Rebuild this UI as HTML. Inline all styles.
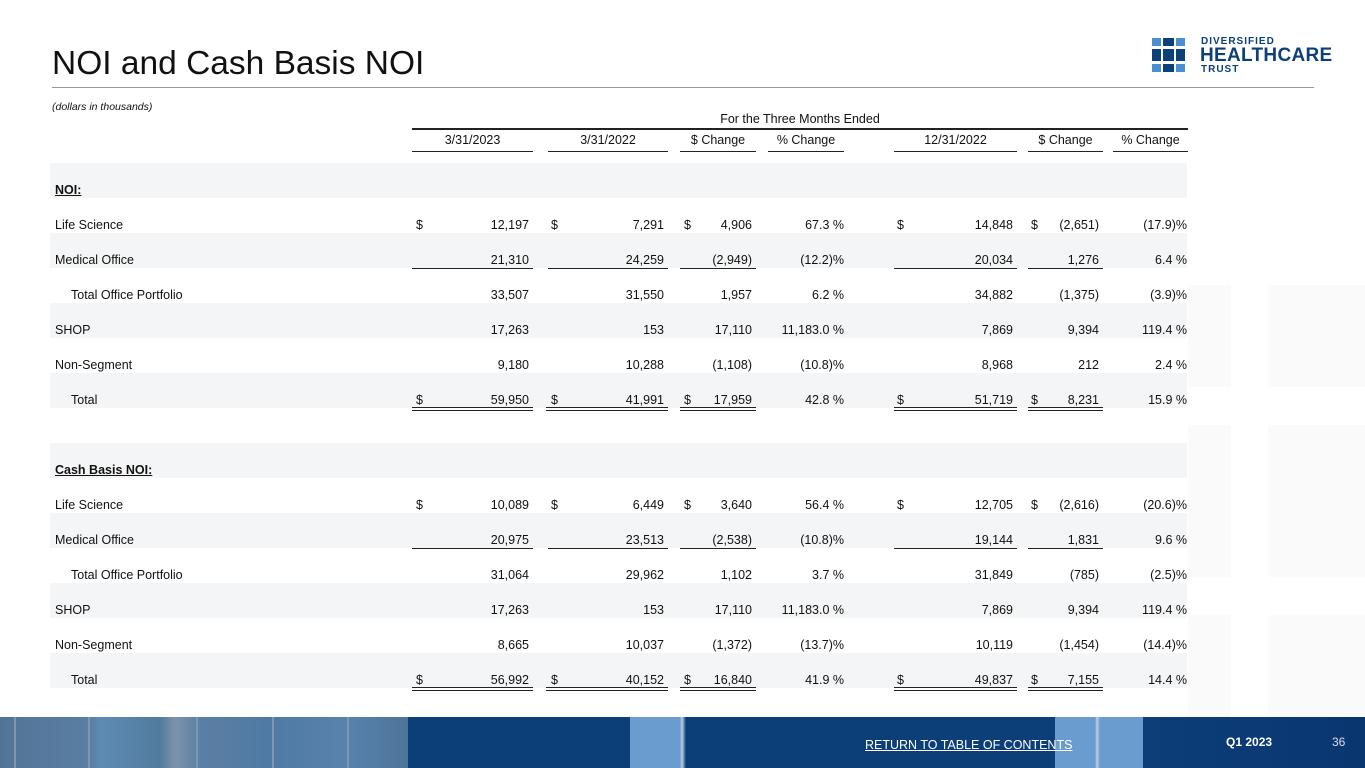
<!DOCTYPE html>
<html><head><meta charset="utf-8"><style>
*{margin:0;padding:0;box-sizing:border-box}
body{width:1365px;height:768px;position:relative;overflow:hidden;background:#fff;font-family:"Liberation Sans",sans-serif;color:#111}
.a{position:absolute}
.r{position:absolute;left:50px;width:1137px;height:35px;font-size:12.5px}
.g{background:#f4f5f6}
.r span{position:absolute;top:20px;white-space:nowrap;line-height:14px}
.l{left:5px}
.i{left:21px}
.c{text-align:right}
.c1{left:362px;width:117px}.c2{left:498px;width:116px}.c3{left:630px;width:72px}.c4{left:718px;width:76px}
.c5{left:844px;width:119px}.c6{left:978px;width:71px}.c7{left:1063px;width:74px}
.d1{left:366px}.d2{left:501px}.d3{left:634px}.d5{left:847px}.d6{left:981px}
.u{position:absolute;height:0;border-top:1px solid #222}
.uu{position:absolute;height:4px;border-top:1px solid #222;border-bottom:1px solid #222}
.h{position:absolute;top:133px;font-size:12.5px;text-align:center;border-bottom:1px solid #222;height:19px}
.bg{position:absolute;background:#fafafb}
</style></head><body>
<div class="bg" style="left:1188px;top:285px;width:43px;height:102px"></div>
<div class="bg" style="left:1268px;top:285px;width:97px;height:102px"></div>
<div class="bg" style="left:1188px;top:425px;width:43px;height:152px"></div>
<div class="bg" style="left:1268px;top:425px;width:97px;height:152px"></div>
<div class="bg" style="left:1188px;top:615px;width:43px;height:102px"></div>
<div class="bg" style="left:1268px;top:615px;width:97px;height:102px"></div>

<div class="a" style="left:52px;top:45px;font-size:33.5px;color:#111">NOI and Cash Basis NOI</div>
<div class="a" style="left:52px;top:87px;width:1262px;border-top:1px solid #999"></div>
<svg class="a" style="left:1150px;top:36px" width="60" height="40">
<g fill="#4a90d0"><rect x="2" y="2" width="9" height="8"/><rect x="26" y="2" width="9" height="8"/><rect x="2" y="28" width="9" height="8"/><rect x="26" y="28" width="9" height="8"/></g>
<g fill="#0d3f7a"><rect x="13" y="2" width="11" height="8"/><rect x="2" y="13" width="9" height="12"/><rect x="13" y="13" width="11" height="12"/><rect x="26" y="13" width="9" height="12"/><rect x="13" y="28" width="11" height="8"/></g>
</svg>
<div class="a" style="left:1201px;top:36px;font-size:10px;font-weight:bold;color:#0d3f7a;letter-spacing:1px">DIVERSIFIED</div>
<div class="a" style="left:1200px;top:45px;font-size:19px;font-weight:bold;color:#0d3f7a;letter-spacing:0.3px">HEALTHCARE</div>
<div class="a" style="left:1201px;top:64px;font-size:10px;font-weight:bold;color:#0d3f7a;letter-spacing:1px">TRUST</div>

<div class="a" style="left:52px;top:101px;font-size:10.5px;font-style:italic">(dollars in thousands)</div>
<div class="a" style="left:412px;top:112px;width:776px;text-align:center;font-size:12.5px">For the Three Months Ended</div>
<div class="a" style="left:412px;top:128px;width:776px;border-top:2px solid #222"></div>
<div class="h" style="left:412px;width:121px">3/31/2023</div>
<div class="h" style="left:548px;width:120px">3/31/2022</div>
<div class="h" style="left:680px;width:76px">$ Change</div>
<div class="h" style="left:768px;width:76px">% Change</div>
<div class="h" style="left:894px;width:123px">12/31/2022</div>
<div class="h" style="left:1028px;width:75px">$ Change</div>
<div class="h" style="left:1113px;width:75px">% Change</div>

<div class="r g" style="top:163px"><span class="l" style="font-weight:bold;text-decoration:underline">NOI:</span></div>
<div class="r" style="top:198px"><span class="l">Life Science</span><span class="d1">$</span><span class="c c1">12,197</span><span class="d2">$</span><span class="c c2">7,291</span><span class="d3">$</span><span class="c c3">4,906</span><span class="c c4">67.3 %</span><span class="d5">$</span><span class="c c5">14,848</span><span class="d6">$</span><span class="c c6">(2,651)</span><span class="c c7">(17.9)%</span></div>
<div class="r g" style="top:233px"><span class="l">Medical Office</span><span class="c c1">21,310</span><span class="c c2">24,259</span><span class="c c3">(2,949)</span><span class="c c4">(12.2)%</span><span class="c c5">20,034</span><span class="c c6">1,276</span><span class="c c7">6.4 %</span></div>
<div class="r" style="top:268px"><span class="i">Total Office Portfolio</span><span class="c c1">33,507</span><span class="c c2">31,550</span><span class="c c3">1,957</span><span class="c c4">6.2 %</span><span class="c c5">34,882</span><span class="c c6">(1,375)</span><span class="c c7">(3.9)%</span></div>
<div class="r g" style="top:303px"><span class="l">SHOP</span><span class="c c1">17,263</span><span class="c c2">153</span><span class="c c3">17,110</span><span class="c c4">11,183.0 %</span><span class="c c5">7,869</span><span class="c c6">9,394</span><span class="c c7">119.4 %</span></div>
<div class="r" style="top:338px"><span class="l">Non-Segment</span><span class="c c1">9,180</span><span class="c c2">10,288</span><span class="c c3">(1,108)</span><span class="c c4">(10.8)%</span><span class="c c5">8,968</span><span class="c c6">212</span><span class="c c7">2.4 %</span></div>
<div class="r g" style="top:373px"><span class="i">Total</span><span class="d1">$</span><span class="c c1">59,950</span><span class="d2">$</span><span class="c c2">41,991</span><span class="d3">$</span><span class="c c3">17,959</span><span class="c c4">42.8 %</span><span class="d5">$</span><span class="c c5">51,719</span><span class="d6">$</span><span class="c c6">8,231</span><span class="c c7">15.9 %</span></div>
<div class="r" style="top:408px"></div>
<div class="r g" style="top:443px"><span class="l" style="font-weight:bold;text-decoration:underline">Cash Basis NOI:</span></div>
<div class="r" style="top:478px"><span class="l">Life Science</span><span class="d1">$</span><span class="c c1">10,089</span><span class="d2">$</span><span class="c c2">6,449</span><span class="d3">$</span><span class="c c3">3,640</span><span class="c c4">56.4 %</span><span class="d5">$</span><span class="c c5">12,705</span><span class="d6">$</span><span class="c c6">(2,616)</span><span class="c c7">(20.6)%</span></div>
<div class="r g" style="top:513px"><span class="l">Medical Office</span><span class="c c1">20,975</span><span class="c c2">23,513</span><span class="c c3">(2,538)</span><span class="c c4">(10.8)%</span><span class="c c5">19,144</span><span class="c c6">1,831</span><span class="c c7">9.6 %</span></div>
<div class="r" style="top:548px"><span class="i">Total Office Portfolio</span><span class="c c1">31,064</span><span class="c c2">29,962</span><span class="c c3">1,102</span><span class="c c4">3.7 %</span><span class="c c5">31,849</span><span class="c c6">(785)</span><span class="c c7">(2.5)%</span></div>
<div class="r g" style="top:583px"><span class="l">SHOP</span><span class="c c1">17,263</span><span class="c c2">153</span><span class="c c3">17,110</span><span class="c c4">11,183.0 %</span><span class="c c5">7,869</span><span class="c c6">9,394</span><span class="c c7">119.4 %</span></div>
<div class="r" style="top:618px"><span class="l">Non-Segment</span><span class="c c1">8,665</span><span class="c c2">10,037</span><span class="c c3">(1,372)</span><span class="c c4">(13.7)%</span><span class="c c5">10,119</span><span class="c c6">(1,454)</span><span class="c c7">(14.4)%</span></div>
<div class="r g" style="top:653px"><span class="i">Total</span><span class="d1">$</span><span class="c c1">56,992</span><span class="d2">$</span><span class="c c2">40,152</span><span class="d3">$</span><span class="c c3">16,840</span><span class="c c4">41.9 %</span><span class="d5">$</span><span class="c c5">49,837</span><span class="d6">$</span><span class="c c6">7,155</span><span class="c c7">14.4 %</span></div>

<div class="u" style="left:412px;top:268px;width:121px"></div><div class="u" style="left:548px;top:268px;width:120px"></div><div class="u" style="left:680px;top:268px;width:76px"></div><div class="u" style="left:894px;top:268px;width:123px"></div><div class="u" style="left:1028px;top:268px;width:75px"></div>
<div class="u" style="left:412px;top:548px;width:121px"></div><div class="u" style="left:548px;top:548px;width:120px"></div><div class="u" style="left:680px;top:548px;width:76px"></div><div class="u" style="left:894px;top:548px;width:123px"></div><div class="u" style="left:1028px;top:548px;width:75px"></div>
<div class="uu" style="left:412px;top:407px;width:121px"></div><div class="uu" style="left:546px;top:407px;width:122px"></div><div class="uu" style="left:680px;top:407px;width:76px"></div><div class="uu" style="left:894px;top:407px;width:123px"></div><div class="uu" style="left:1028px;top:407px;width:75px"></div>
<div class="uu" style="left:412px;top:687px;width:121px"></div><div class="uu" style="left:546px;top:687px;width:122px"></div><div class="uu" style="left:680px;top:687px;width:76px"></div><div class="uu" style="left:894px;top:687px;width:123px"></div><div class="uu" style="left:1028px;top:687px;width:75px"></div>

<div class="a" style="left:0;top:717px;width:1365px;height:51px;background:linear-gradient(90deg,#527596 0,#5a7ea3 90px,#5e8bb3 100px,#527a9e 160px,#7d93aa 175px,#5b7fa4 200px,#4f7aa3 270px,#5982ad 345px,#4d7499 408px,#0c3e78 408px,#0c3e78 630px,#6b9ccf 630px,#6b9ccf 680px,#c0d0e0 682px,#0c3e78 686px,#0c3e78 1055px,#6b9ccf 1055px,#6b9ccf 1095px,#c0d0e0 1097px,#6b9ccf 1100px,#6b9ccf 1143px,#0c3e78 1143px,#0a3670 1365px)"></div>
<div class="a" style="left:14px;top:717px;width:2px;height:51px;background:#7f97ae"></div>
<div class="a" style="left:88px;top:717px;width:2px;height:51px;background:#7f97ae"></div>
<div class="a" style="left:196px;top:717px;width:2px;height:51px;background:#7f97ae"></div>
<div class="a" style="left:272px;top:717px;width:2px;height:51px;background:#7f97ae"></div>
<div class="a" style="left:347px;top:717px;width:2px;height:51px;background:#7f97ae"></div>
<div class="a" style="left:865px;top:738px;font-size:12.5px;color:#fff;text-decoration:underline">RETURN TO TABLE OF CONTENTS</div>
<div class="a" style="left:1226px;top:735px;font-size:12px;color:#fff;font-weight:bold">Q1 2023</div>
<div class="a" style="left:1332px;top:735px;font-size:12px;color:#dde">36</div>
</body></html>
